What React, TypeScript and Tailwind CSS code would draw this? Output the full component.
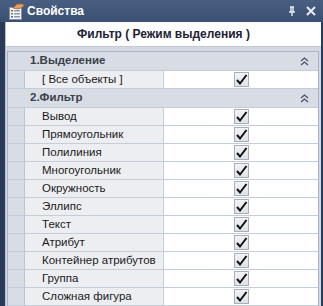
const FONT = { fontFamily: '"Liberation Sans", Arial, sans-serif' };

const selectRows = ['[ Все объекты ]'];
const filterRows = [
  'Вывод',
  'Прямоугольник',
  'Полилиния',
  'Многоугольник',
  'Окружность',
  'Эллипс',
  'Текст',
  'Атрибут',
  'Контейнер атрибутов',
  'Группа',
  'Сложная фигура',
];

function PropsIcon() {
  return (
    <svg width="17" height="17" viewBox="0 0 17 17">
      <rect x="1.5" y="4.5" width="12" height="12" fill="#f7f7f7" stroke="#8a8f98" />
      <rect x="3" y="7" width="2" height="1.5" fill="#d44" />
      <rect x="6" y="7" width="6" height="1.5" fill="#8a9ab5" />
      <rect x="3" y="10" width="2" height="1.5" fill="#3a3" />
      <rect x="6" y="10" width="6" height="1.5" fill="#8a9ab5" />
      <rect x="3" y="13" width="2" height="1.5" fill="#36c" />
      <rect x="6" y="13" width="6" height="1.5" fill="#8a9ab5" />
      <path d="M5 5 L9 1 L15 1 L16 3 L13 5 L10 6 Z" fill="#e0a060" stroke="#9a6030" strokeWidth="0.8" />
    </svg>
  );
}

function Collapse() {
  return (
    <svg width="9" height="9" viewBox="0 0 9 9" className="text-[#4a5468]">
      <path d="M1 4 L4.5 1 L8 4 M1 8 L4.5 5 L8 8" fill="none" stroke="currentColor" strokeWidth="1.3" />
    </svg>
  );
}

function Check() {
  return (
    <div className="w-[15px] h-[15px] border border-[#a9afba] bg-gradient-to-b from-[#f2f3f5] to-[#dfe2e8] flex items-center justify-center">
      <svg width="13" height="13" viewBox="0 0 13 13">
        <path d="M2 7 L5 10.5 L11.5 2" fill="none" stroke="#111" strokeWidth="2" />
      </svg>
    </div>
  );
}

function Category({ title }: { title: string }) {
  return (
    <div className="flex h-[19px] bg-[#d8dce5] items-center border-b border-[#c6cdda]">
      <div className="w-[17px] shrink-0" />
      <div className="flex-1 pl-[5px] font-bold text-[11.5px] text-[#3a3f4a]">{title}</div>
      <div className="w-[16px] flex items-center justify-center mr-[6px]">
        <Collapse />
      </div>
    </div>
  );
}

function Row({ name }: { name: string }) {
  return (
    <div className="flex h-[18px] border-b border-[#c6cdda]">
      <div className="w-[17px] shrink-0 bg-[#d8dce5] border-r border-[#bcc5d5]" />
      <div className="w-[139px] shrink-0 bg-[#eceef2] border-r border-[#c6cdda] pl-[17px] text-[11.5px] text-[#1a1a1a] leading-[17px] whitespace-nowrap overflow-hidden">
        {name}
      </div>
      <div className="flex-1 bg-white flex items-center justify-center">
        <Check />
      </div>
    </div>
  );
}

export default function App() {
  return (
    <div className="w-[323px] h-[306px] bg-[#2a3a5b] flex flex-col overflow-hidden" style={FONT}>
      <div className="h-[22px] shrink-0 flex items-center bg-gradient-to-b from-[#485f82] to-[#3a5073] pl-[8px] pr-[6px]">
        <PropsIcon />
        <span className="ml-[2px] text-white font-bold text-[12px]">Свойства</span>
        <div className="flex-1" />
        <svg width="10" height="10" viewBox="0 0 10 10" className="mr-[9px]">
          <path d="M3 1 H7 M4 1 V6 M6 1 V6 M2 6 H8 M5 6 V10" stroke="#e8ecf2" strokeWidth="1.4" fill="none" />
        </svg>
        <svg width="10" height="10" viewBox="0 0 10 10" className="mr-[1px]">
          <path d="M1 1 L9 9 M9 1 L1 9" stroke="#e8ecf2" strokeWidth="2" />
        </svg>
      </div>
      <div className="flex-1 ml-[5px] mr-[2px] bg-[#d3d8e1] border-l border-[#b7c0cf] flex flex-col">
        <div className="h-[25px] shrink-0 bg-white border-b border-[#c1c8d4] flex items-center justify-center font-bold text-[12px] text-[#1c2233]">
          Фильтр ( Режим выделения )
        </div>
        <div className="flex-1 mt-[4px] ml-[1px] mr-[2px] border border-[#a9b3c5] bg-[#d8dce5] overflow-hidden">
          <Category title="1.Выделение" />
          {selectRows.map((r) => (
            <Row key={r} name={r} />
          ))}
          <Category title="2.Фильтр" />
          {filterRows.map((r) => (
            <Row key={r} name={r} />
          ))}
        </div>
      </div>
    </div>
  );
}
